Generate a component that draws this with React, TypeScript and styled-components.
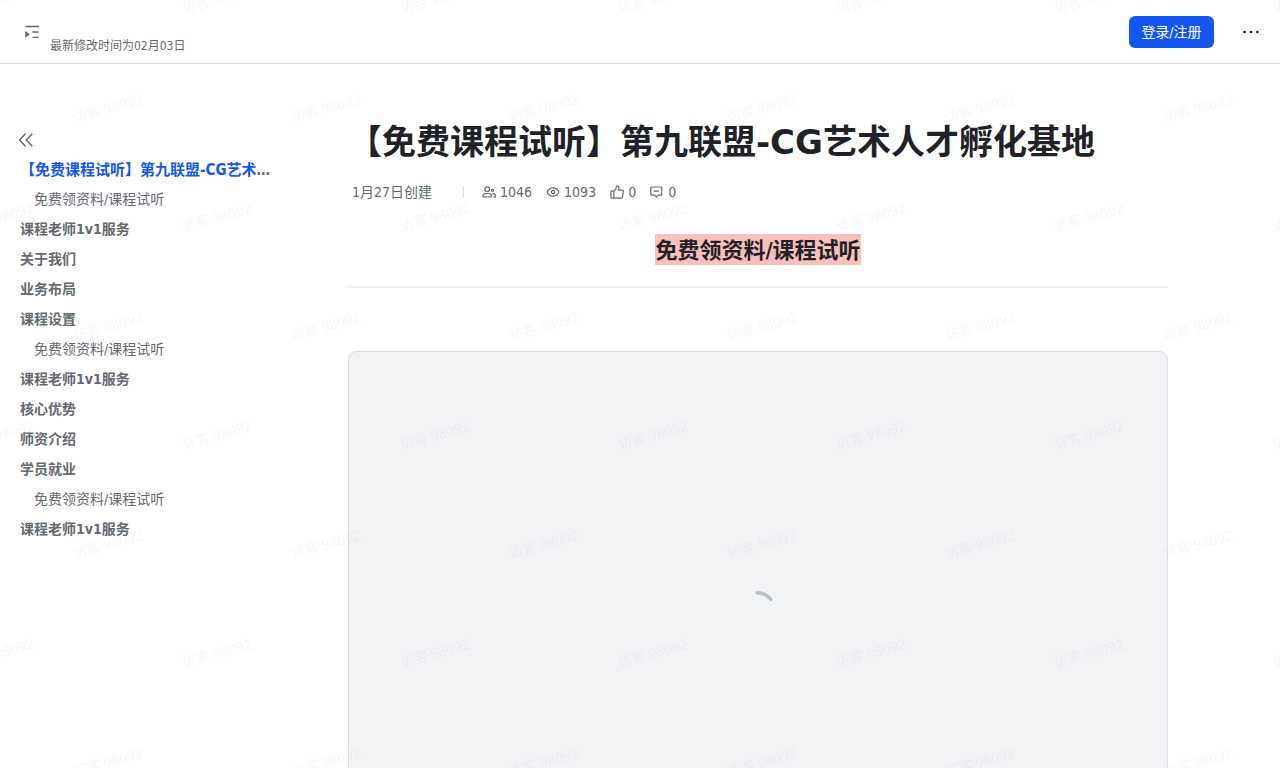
import React from "react";
import styled, { createGlobalStyle } from "styled-components";

const GlobalStyle = createGlobalStyle`
  *, *::before, *::after { box-sizing: border-box; }
  html { scrollbar-width: none; }
  body {
    margin: 0;
    background: #fff;
    color: #1f2329;
    font-family: "DejaVu Sans Condensed", "Noto Sans CJK SC", sans-serif;
    font-size: 14px;
  }
`;

const Header = styled.header`
  display: flex;
  align-items: center;
  height: 64px;
  padding: 0 17px 0 24px;
  border-bottom: 1px solid #dee0e3;
`;

const IconButton = styled.button<{ $size: number; $color?: string }>`
  display: flex;
  align-items: center;
  justify-content: center;
  width: ${(p) => p.$size}px;
  height: ${(p) => p.$size}px;
  padding: 0;
  border: 0;
  background: none;
  color: ${(p) => p.$color ?? "#646a73"};
  cursor: pointer;
`;

const Modified = styled.span`
  flex: 1;
  margin-left: 10px;
  padding-top: 28px;
  color: #646a73;
  font-size: 12px;
  line-height: 18px;
`;

const LoginButton = styled.button`
  min-width: 85px;
  height: 32px;
  margin-right: 25px;
  padding: 0 12px;
  border: 0;
  border-radius: 6px;
  background: #1456f0;
  color: #fff;
  font: inherit;
  line-height: 22px;
  white-space: nowrap;
  cursor: pointer;
`;

const Body = styled.div`
  display: flex;
  align-items: flex-start;
`;

const Sidebar = styled.aside`
  flex: none;
  width: 274px;
  padding-top: 66px;
`;

const Collapse = styled.div`
  padding-left: 16px;
  margin-bottom: 4px;
`;

const Outline = styled.ul`
  margin: 0;
  padding: 0 0 0 20px;
  list-style: none;
`;

const OutlineItem = styled.li<{ $level: number }>`
  height: 30px;
  padding-left: ${(p) => (p.$level === 2 ? 14 : 0)}px;
  overflow: hidden;
  color: #646a73;
  font-size: ${(p) => (p.$level === 0 ? 15 : 14)}px;
  font-weight: ${(p) => (p.$level === 2 ? 400 : 700)};
  line-height: ${(p) => (p.$level === 0 ? 32 : 30)}px;
  text-overflow: ellipsis;
  white-space: nowrap;
`;

const OutlineLink = styled.a<{ $active: boolean }>`
  color: ${(p) => (p.$active ? "#1456f0" : "inherit")};
  text-decoration: none;
`;

const Main = styled.main`
  flex: 1;
  min-width: 0;
  padding: 52px 112px 64px 74px;
`;

const Title = styled.h1`
  margin: 0;
  font-family: "DejaVu Sans", "Noto Sans CJK SC", sans-serif;
  font-size: 34px;
  font-weight: 700;
  line-height: 52px;
`;

const Meta = styled.div`
  display: flex;
  align-items: center;
  gap: 14px;
  height: 22px;
  margin: 13px 0 31px 4px;
  color: #646a73;
  line-height: 22px;
`;

const Created = styled.span`
  margin-right: 17px;
`;

const Divider = styled.span`
  width: 1px;
  height: 12px;
  margin-right: 4px;
  background: #dee0e3;
`;

const Stat = styled.span`
  display: flex;
  align-items: center;
  gap: 4px;
`;

const Heading = styled.h2`
  margin: 0;
  font-size: 22px;
  font-weight: 700;
  line-height: 31px;
  text-align: center;
`;

const Highlight = styled.span`
  display: inline-block;
  height: 31px;
  background: #fbbfbc;
  line-height: 33px;
  vertical-align: top;
`;

const Rule = styled.hr`
  height: 2px;
  margin: 21px 0 63px;
  border: 0;
  background: #eff0f1;
`;

const EmbedCard = styled.section`
  display: flex;
  align-items: center;
  justify-content: center;
  height: 518px;
  border: 1px solid #dee0e3;
  border-radius: 8px;
  background: #f2f3f5;
`;

const Watermark = styled.svg`
  position: fixed;
  inset: 0;
  z-index: 10;
  width: 100%;
  height: 100%;
  pointer-events: none;
  font-family: "Noto Sans", "Noto Sans CJK SC", sans-serif;
  font-size: 14px;
`;

const iconProps = {
  width: 14,
  height: 14,
  viewBox: "0 0 14 14",
  fill: "none",
  stroke: "currentColor",
  strokeWidth: 1.2,
  strokeLinejoin: "round" as const,
  strokeLinecap: "round" as const,
  "aria-hidden": true,
};

const MenuIcon = () => (
  <svg width="16" height="16" viewBox="0 0 16 16" fill="none" stroke="currentColor" strokeWidth="1.3" aria-hidden="true">
    <path d="M1.5 2.5H15M8.5 8H14.5M8.5 13.3H14.5" />
    <path d="M1.2 7v6.8L6 10.4z" fill="currentColor" stroke="none" />
  </svg>
);

const CollapseIcon = () => (
  <svg width="20" height="20" viewBox="0 0 20 20" fill="none" stroke="currentColor" strokeWidth="1.5" aria-hidden="true">
    <path d="M9.500 3.700L3.500 10l6 6.300M16.300 3.700L10.300 10l6 6.300" />
  </svg>
);

const MoreIcon = () => (
  <svg width="24" height="24" viewBox="0 0 24 24" fill="currentColor" aria-hidden="true">
    <circle cx="5.5" cy="12" r="1.3" />
    <circle cx="12" cy="12" r="1.3" />
    <circle cx="18.4" cy="12" r="1.3" />
  </svg>
);

const PeopleIcon = () => (
  <svg {...iconProps}>
    <circle cx="5.2" cy="4.200" r="2.300" />
    <path d="M1 12v-1c0-1.600 1.200-2.500 2.600-2.500h3.200c1.400 0 2.600.9 2.600 2.500v1z" />
    <circle cx="10.600" cy="5.400" r="1.100" />
    <path d="M10.800 8.700c1.600 0 2.500.8 2.500 2.100V12h-1.500" />
  </svg>
);

const EyeIcon = () => (
  <svg {...iconProps}>
    <path d="M1.100 7C2.300 4.300 4.300 2.800 7 2.800S11.700 4.300 12.900 7C11.700 9.700 9.700 11.200 7 11.200S2.300 9.700 1.100 7z" />
    <circle cx="7" cy="7" r="1.600" />
  </svg>
);

const ThumbIcon = () => (
  <svg {...iconProps}>
    <path d="M3.900 6.200H1.600a.6.6 0 0 0-.6.6v5.800a.6.6 0 0 0 .6.6h2.300zM3.900 6.200C5.600 5.200 6.200 3.600 6.300 1.700c0-.6.4-.9.9-.9 1.200 0 1.800 1 1.700 2.200L8.600 5.200h3.500c.8 0 1.300.6 1.200 1.300l-.8 5.500c-.1.7-.6 1.200-1.300 1.200H3.900" />
  </svg>
);

const CommentIcon = () => (
  <svg {...iconProps}>
    <path d="M1.400 2h9.800a.6.600 0 0 1 .6.600v7a.6.600 0 0 1-.6.600H8L6.300 12 4.600 10.200H1.400a.6.600 0 0 1-.6-.6v-7a.6.600 0 0 1 .6-.6z" />
    <path d="M4.200 6.200h4.200" />
  </svg>
);

const Spinner = () => (
  <svg width="40" height="40" viewBox="0 0 40 40" fill="none" role="img" aria-label="加载中">
    <path d="M19 2.700A17.500 17.500 0 0 1 32.700 9.300" stroke="#bbbfc4" strokeWidth="3.400" strokeLinecap="round" />
  </svg>
);

const outline = [
  { text: "【免费课程试听】第九联盟-CG艺术人才孵化基地", level: 0 },
  { text: "免费领资料/课程试听", level: 2 },
  { text: "课程老师1v1服务", level: 1 },
  { text: "关于我们", level: 1 },
  { text: "业务布局", level: 1 },
  { text: "课程设置", level: 1 },
  { text: "免费领资料/课程试听", level: 2 },
  { text: "课程老师1v1服务", level: 1 },
  { text: "核心优势", level: 1 },
  { text: "师资介绍", level: 1 },
  { text: "学员就业", level: 1 },
  { text: "免费领资料/课程试听", level: 2 },
  { text: "课程老师1v1服务", level: 1 },
];

const stats = [
  { label: "访问人数", icon: <PeopleIcon />, value: 1046 },
  { label: "浏览次数", icon: <EyeIcon />, value: 1093 },
  { label: "点赞", icon: <ThumbIcon />, value: 0 },
  { label: "评论", icon: <CommentIcon />, value: 0 },
];

export default function App() {
  return (
    <>
      <GlobalStyle />
      <Header>
        <IconButton type="button" $size={16} aria-label="目录">
          <MenuIcon />
        </IconButton>
        <Modified>最新修改时间为02月03日</Modified>
        <LoginButton type="button">登录/注册</LoginButton>
        <IconButton type="button" $size={24} $color="#1f2329" aria-label="更多">
          <MoreIcon />
        </IconButton>
      </Header>
      <Body>
        <Sidebar>
          <Collapse>
            <IconButton type="button" $size={20} aria-label="收起目录">
              <CollapseIcon />
            </IconButton>
          </Collapse>
          <nav>
            <Outline>
              {outline.map((item, i) => (
                <OutlineItem key={i} $level={item.level}>
                  <OutlineLink href={`#section-${i}`} $active={i === 0}>
                    {item.text}
                  </OutlineLink>
                </OutlineItem>
              ))}
            </Outline>
          </nav>
        </Sidebar>
        <Main>
          <Title id="section-0">【免费课程试听】第九联盟-CG艺术人才孵化基地</Title>
          <Meta>
            <Created>1月27日创建</Created>
            <Divider />
            {stats.map((s) => (
              <Stat key={s.label} title={s.label}>
                {s.icon}
                {s.value}
              </Stat>
            ))}
          </Meta>
          <Heading id="section-1">
            <Highlight>免费领资料/课程试听</Highlight>
          </Heading>
          <Rule />
          <EmbedCard>
            <Spinner />
          </EmbedCard>
        </Main>
      </Body>
      <Watermark aria-hidden="true">
        <defs>
          <pattern id="watermark" width="218" height="218" patternUnits="userSpaceOnUse">
            <g fill="#1f2329" fillOpacity="0.04" textAnchor="middle">
              <text transform="translate(109 113) rotate(-15)">访客 98092</text>
              <text transform="translate(0 4) rotate(-15)">访客 98092</text>
              <text transform="translate(218 4) rotate(-15)">访客 98092</text>
              <text transform="translate(0 222) rotate(-15)">访客 98092</text>
              <text transform="translate(218 222) rotate(-15)">访客 98092</text>
            </g>
          </pattern>
        </defs>
        <rect width="100%" height="100%" fill="url(#watermark)" />
      </Watermark>
    </>
  );
}
